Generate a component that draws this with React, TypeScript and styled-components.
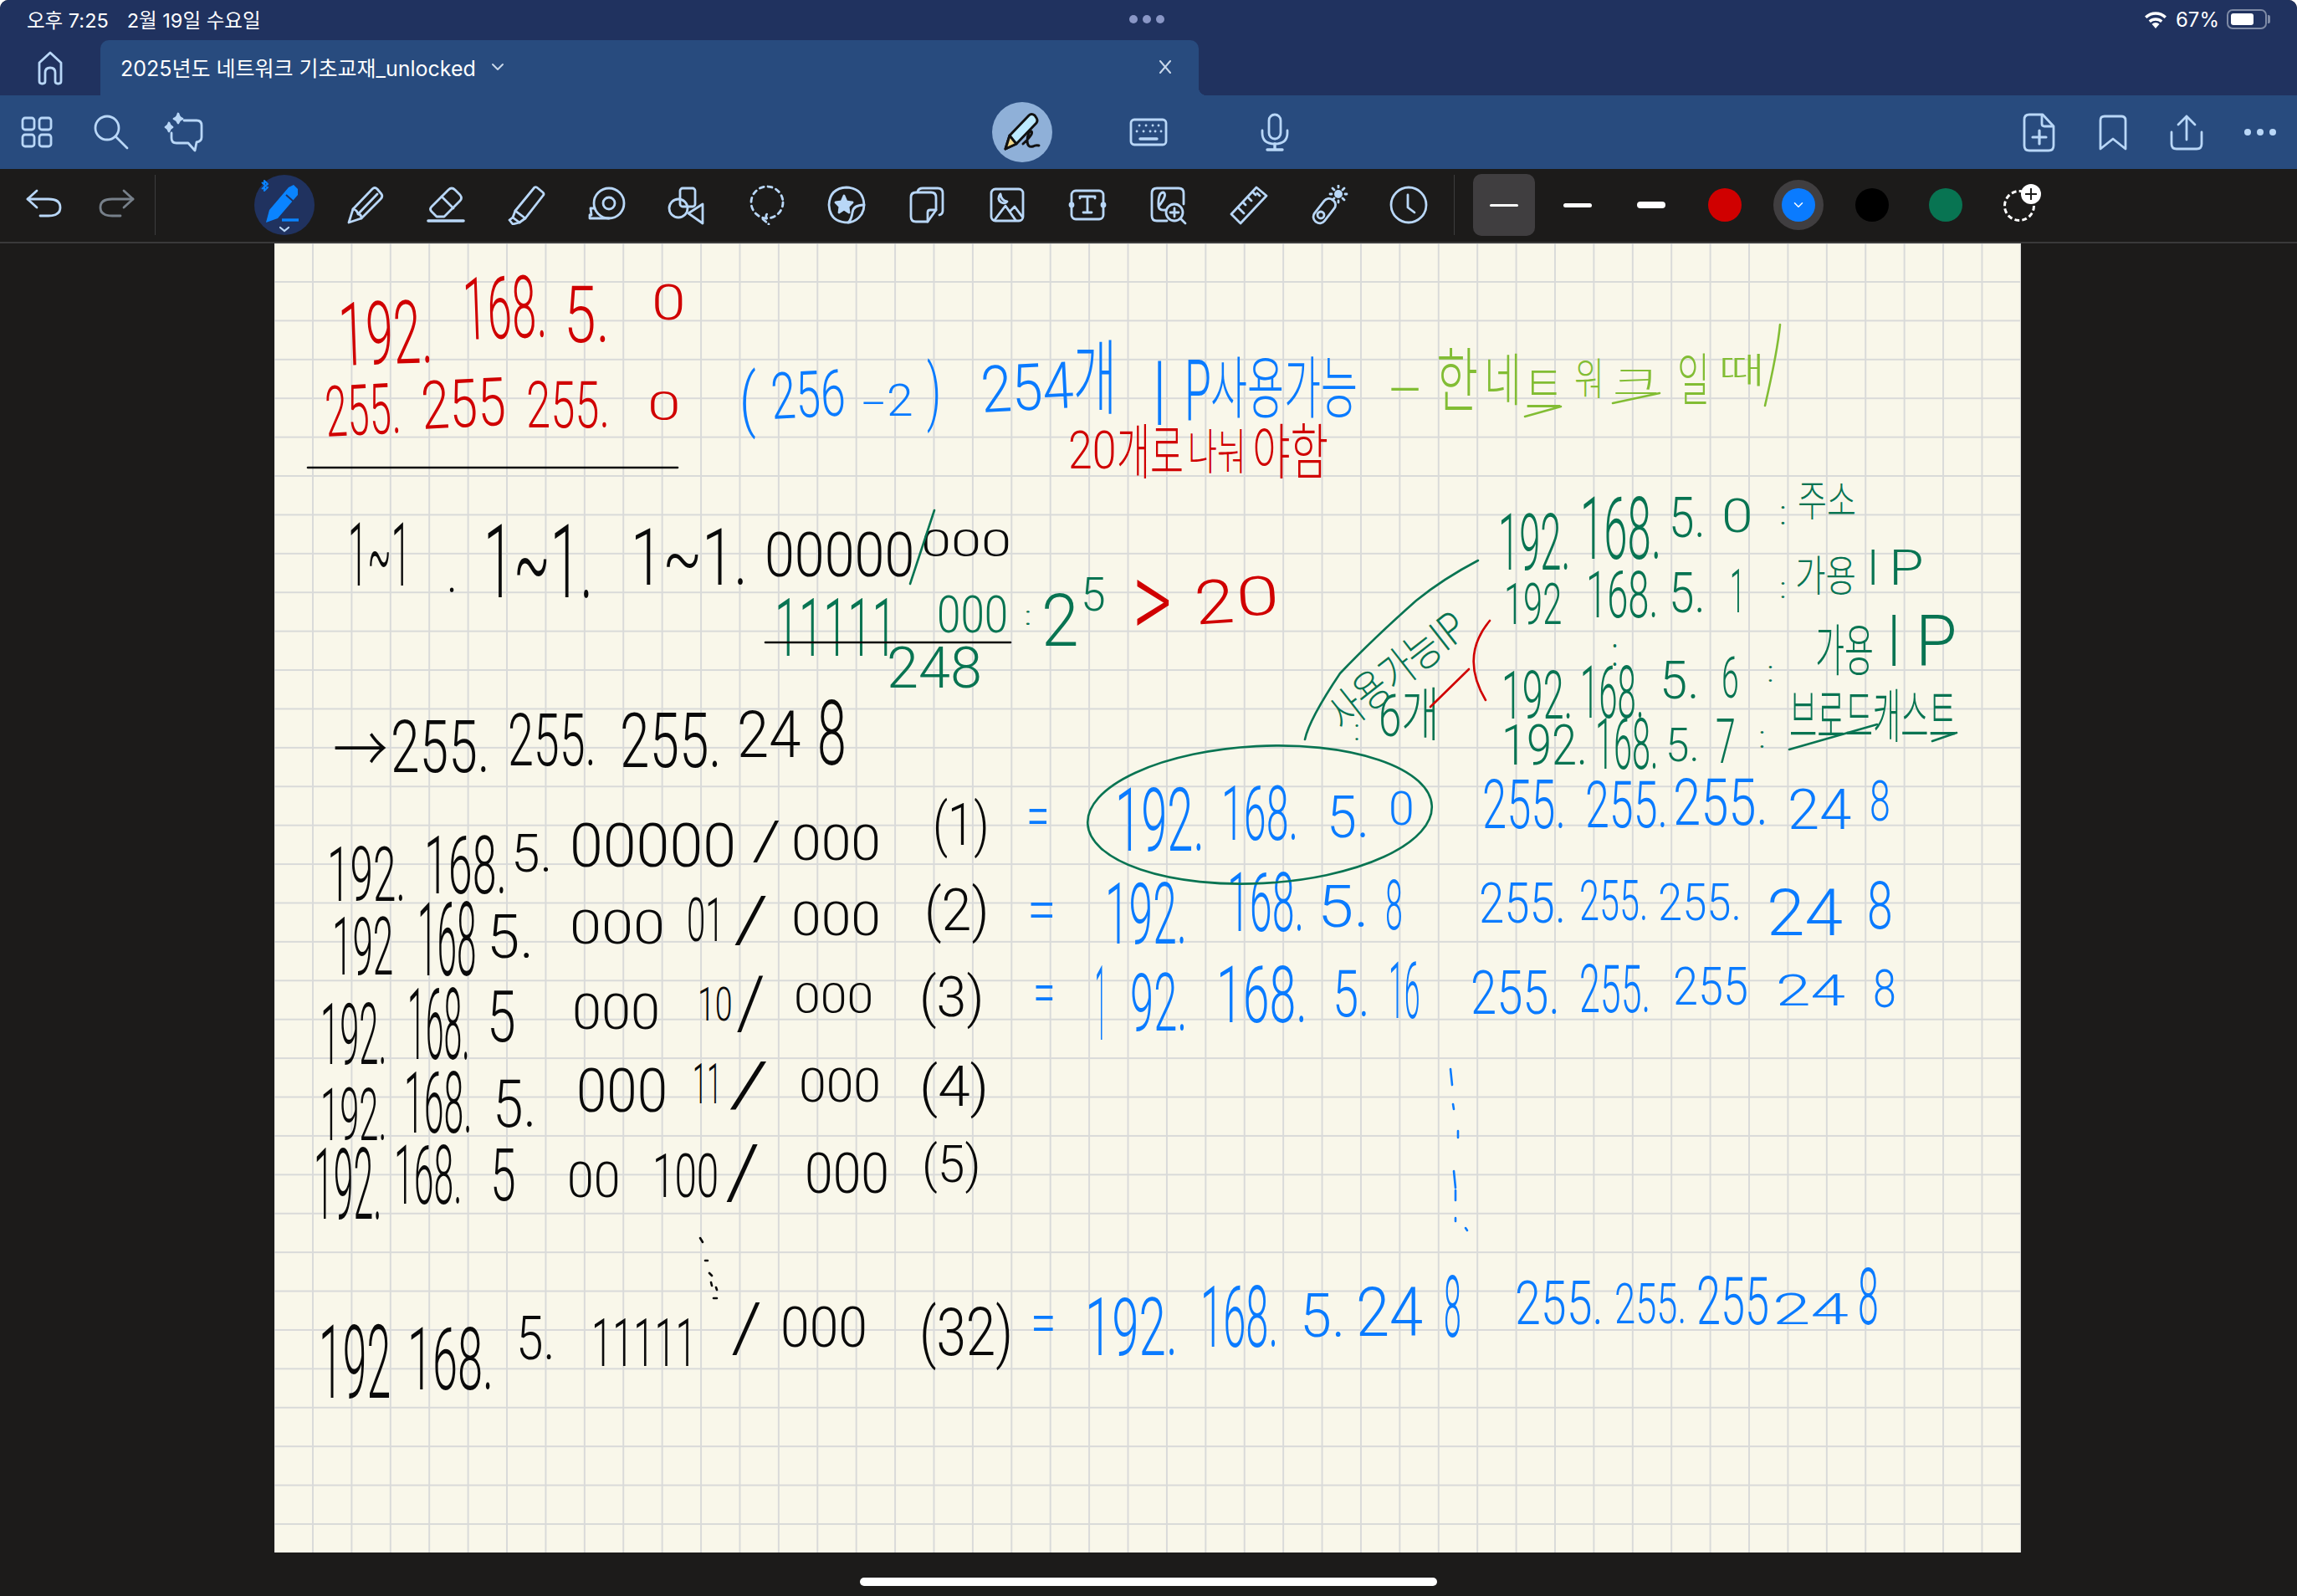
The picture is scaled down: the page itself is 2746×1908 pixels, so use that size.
import React from 'react';
import styled, { createGlobalStyle } from 'styled-components';

const GlobalStyle = createGlobalStyle`
  html, body {
    margin: 0;
    padding: 0;
    background: #ffffff;
  }
  * {
    box-sizing: border-box;
  }
`;

const Root = styled.div`
  display: flex;
  flex-direction: column;
  width: 2746px;
  height: 1908px;
  overflow: hidden;
  font-family: 'Inter', 'Noto Sans CJK KR', sans-serif;
  color: #ffffff;
  background: #1c1b1a;
  border-radius: 10px 10px 0 0;
`;

const Header = styled.header`
  height: 114px;
  background: #20325f;
`;

const StatusBar = styled.div`
  display: grid;
  grid-template-columns: 1fr auto 1fr;
  align-items: center;
  height: 48px;
  padding: 0 36px 2px 32px;
  font-size: 23.5px;
`;

const StatusLeft = styled.div`
  display: flex;
  gap: 22px;
`;

const StatusDots = styled.div`
  display: flex;
  gap: 6px;
`;

const StatusDot = styled.span`
  width: 10px;
  height: 10px;
  border-radius: 50%;
  background: #8a97c6;
`;

const StatusRight = styled.div`
  display: flex;
  align-items: center;
  justify-content: flex-end;
  gap: 9px;
  font-size: 24px;
`;

const Battery = styled.div`
  position: relative;
  width: 48px;
  height: 24px;
  padding: 3px;
  border: 2px solid #7e8aa5;
  border-radius: 7px;

  &::before {
    content: '';
    display: block;
    width: 27px;
    height: 100%;
    border-radius: 3px;
    background: #ffffff;
  }

  &::after {
    content: '';
    position: absolute;
    top: 5px;
    right: -6px;
    width: 3px;
    height: 10px;
    border-radius: 0 2px 2px 0;
    background: #7e8aa5;
  }
`;

const TabRow = styled.div`
  display: flex;
  height: 66px;
`;

const HomeSlot = styled.div`
  display: flex;
  align-items: center;
  justify-content: center;
  width: 120px;
  color: #b9d7f7;
`;

const Tab = styled.div`
  position: relative;
  display: flex;
  align-items: center;
  width: 1313px;
  padding: 0 32px 2px 24px;
  font-size: 25px;
  background: #284b7e;
  border-radius: 10px 10px 0 0;

  &::after {
    content: '';
    position: absolute;
    right: -10px;
    bottom: 0;
    width: 10px;
    height: 10px;
    background: radial-gradient(circle at 100% 0, #20325f 10px, #284b7e 10.5px);
  }
`;

const TabTitle = styled.span`
  flex: 0 0 auto;
`;

const TabChevron = styled.span`
  display: flex;
  margin-left: 18px;
  color: #c9d8ea;
`;

const TabClose = styled.span`
  display: flex;
  margin-left: auto;
  color: #c9d8ea;
`;

const MainToolbar = styled.div`
  display: grid;
  grid-template-columns: 1fr auto 1fr;
  align-items: center;
  height: 88px;
  color: #b9d7f7;
  background: #284b7e;
`;

const ToolGroup = styled.div<{ $end?: boolean }>`
  display: flex;
  align-items: center;
  justify-content: ${props => (props.$end ? 'flex-end' : 'flex-start')};
`;

const Slot = styled.div<{ $width: number }>`
  display: flex;
  flex: 0 0 auto;
  align-items: center;
  justify-content: center;
  width: ${props => props.$width}px;
  height: 72px;
`;

const InputCircle = styled.div`
  display: flex;
  align-items: center;
  justify-content: center;
  width: 72px;
  height: 72px;
  border-radius: 50%;
  background: #8fb0d8;
`;

const MoreDots = styled.div`
  display: flex;
  gap: 7px;
`;

const MoreDot = styled.span`
  width: 8px;
  height: 8px;
  border-radius: 50%;
  background: #b9d7f7;
`;

const PenToolbar = styled.div`
  display: flex;
  align-items: center;
  height: 89px;
  padding: 0 0 1px 8px;
  color: #b9d7f7;
  background: #1c1b1a;
  border-bottom: 2px solid #3a3a3a;
`;

const Divider = styled.span<{ $gapLeft: number; $gapRight: number }>`
  flex: 0 0 1px;
  height: 72px;
  margin-left: ${props => props.$gapLeft}px;
  margin-right: ${props => props.$gapRight}px;
  background: #3d3d3d;
`;

const Redo = styled.span`
  display: flex;
  color: #77808a;
`;

const ActivePen = styled.div`
  position: relative;
  display: flex;
  align-items: center;
  justify-content: center;
  width: 72px;
  height: 72px;
  border-radius: 50%;
  background: #20325f;
`;

const SizeBox = styled.div<{ $active?: boolean }>`
  display: flex;
  align-items: center;
  justify-content: center;
  width: 74px;
  height: 74px;
  border-radius: 10px;
  background: ${props => (props.$active ? '#403e40' : 'transparent')};
`;

const SizeDash = styled.span<{ $weight: number }>`
  width: 34px;
  height: ${props => props.$weight}px;
  border-radius: ${props => props.$weight / 2}px;
  background: #ffffff;
`;

const ColorRing = styled.div<{ $active?: boolean }>`
  display: flex;
  align-items: center;
  justify-content: center;
  width: 60px;
  height: 60px;
  border-radius: 50%;
  background: ${props => (props.$active ? '#403e40' : 'transparent')};
`;

const Swatch = styled.div<{ $color: string }>`
  display: flex;
  align-items: center;
  justify-content: center;
  width: 40px;
  height: 40px;
  border-radius: 50%;
  color: #ffffff;
  background: ${props => props.$color};
`;

const AddColor = styled.div`
  position: relative;
  width: 38px;
  height: 38px;
  margin-top: 2px;
  border: 3px dashed #ffffff;
  border-radius: 50%;
`;

const AddBadge = styled.span`
  position: absolute;
  top: -10px;
  right: -10px;
  display: flex;
  align-items: center;
  justify-content: center;
  width: 24px;
  height: 24px;
  border-radius: 50%;
  color: #1c1b1a;
  background: #ffffff;
`;

const Workspace = styled.main`
  display: flex;
  justify-content: flex-start;
  height: 1565px;
  padding-left: 328px;
`;

const Note = styled.section`
  position: relative;
  flex: 0 0 2088px;
  height: 1565px;
  overflow: hidden;
  background-color: #f9f7ea;
  background-image: linear-gradient(to right, #d9dad9 2px, transparent 2px),
    linear-gradient(to bottom, #d9dad9 2px, transparent 2px);
  background-position: 45px 45px;
  background-size: 46.42px 46.42px;
`;

const InkLayer = styled.svg`
  position: absolute;
  inset: 0;
  width: 100%;
  height: 100%;
  pointer-events: none;
`;

const Ink = styled.span<{
  $x: number;
  $y: number;
  $size: number;
  $stretch: number;
  $turn: number;
  $color: string;
}>`
  position: absolute;
  left: ${props => props.$x}px;
  top: ${props => props.$y}px;
  font-family: 'Roboto', 'Noto Sans CJK KR', sans-serif;
  font-size: ${props => props.$size}px;
  font-weight: 300;
  line-height: 0.76;
  white-space: pre;
  color: ${props => props.$color};
  transform: rotate(${props => props.$turn}deg) scaleX(${props => props.$stretch});
  transform-origin: left top;
`;

const HomeBarTrack = styled.div`
  display: flex;
  justify-content: center;
  padding-top: 30px;
`;

const HomeBar = styled.div`
  width: 690px;
  height: 10px;
  border-radius: 5px;
  background: #ffffff;
`;

const IconSvg = styled.svg`
  display: block;
  width: 48px;
  height: 48px;
  fill: none;
  stroke: currentColor;
  stroke-width: 2.8;
  stroke-linecap: round;
  stroke-linejoin: round;
`;

const Icon = ({ children }: { children: React.ReactNode }) => (
  <IconSvg viewBox="0 0 48 48">{children}</IconSvg>
);

const icons: Record<string, React.ReactNode> = {
  grid: (
    <>
      <rect x="7" y="7" width="14" height="14" rx="3" />
      <rect x="27" y="7" width="14" height="14" rx="3" />
      <rect x="7" y="27" width="14" height="14" rx="3" />
      <rect x="27" y="27" width="14" height="14" rx="3" />
    </>
  ),
  search: (
    <>
      <circle cx="20" cy="19" r="14" />
      <path d="M30 29 L44 43" />
    </>
  ),
  assistant: (
    <>
      <path d="M24 10 H39 Q45 10 45 16 V30 Q45 35 39 36 L37 46 L29 37 H15 Q9 37 9 31 V25" />
      <path d="M17 2 Q18 7 22 8 Q18 9 17 13 Q16 9 12 8 Q16 7 17 2 Z" fill="currentColor" />
      <path d="M6 13 Q7 17 10 18 Q7 19 6 23 Q5 19 2 18 Q5 17 6 13 Z" fill="currentColor" />
    </>
  ),
  keyboard: (
    <>
      <rect x="3" y="9" width="42" height="30" rx="4" />
      <path d="M14 32 H34" strokeWidth="3.4" />
      <path d="M13 16 h.1 M21 16 h.1 M29 16 h.1 M36 16 h.1 M10 23 h.1 M18 23 h.1 M26 23 h.1 M32 23 h.1 M39 23 h.1" />
    </>
  ),
  mic: (
    <>
      <rect x="17" y="3" width="14" height="29" rx="7" />
      <path d="M9 22 V25 Q9 38 24 38 Q39 38 39 25 V22" />
      <path d="M24 38 V44 M15 45 H33" strokeWidth="3.4" />
    </>
  ),
  newPage: (
    <>
      <path d="M12 3 H28 L41 17 V40 Q41 46 35 46 H12 Q6 46 6 40 V9 Q6 3 12 3 Z" />
      <path d="M27 4 V14 Q27 17 30 17 H40" />
      <path d="M24 22 V38 M16 30 H32" strokeWidth="3.2" />
    </>
  ),
  bookmark: (
    <>
      <path d="M9 44 V10 Q9 5 14 5 H34 Q39 5 39 10 V44 L24 32 Z" />
    </>
  ),
  share: (
    <>
      <path d="M24 33 V5 M14 15 L24 5 L34 15" />
      <path d="M6 24 V38 Q6 44 12 44 H36 Q42 44 42 38 V24" />
    </>
  ),
  undo: (
    <>
      <path d="M16 7 L5 17 L16 27" />
      <path d="M5 17 H30 Q44 17 44 27 Q44 37 30 37 H20" />
    </>
  ),
  redo: (
    <>
      <path d="M32 7 L43 17 L32 27" />
      <path d="M43 17 H18 Q4 17 4 27 Q4 37 18 37 H28" />
    </>
  ),
  pencil: (
    <>
      <path d="M5 45 L10 29 L33 5 Q36 2 39 5 L44 11 Q46 14 43 17 L20 40 Z" />
      <path d="M10 29 Q15 30 16 35 Q20 35 20 40 M16 35 L39 11" />
    </>
  ),
  eraser: (
    <>
      <path d="M14 38 L8 32 Q5 29 8 26 L28 6 Q32 2 36 6 L42 12 Q45 16 42 19 L23 38 Z" />
      <path d="M20 14 L34 28" />
      <path d="M4 43 H46" strokeWidth="3.6" />
    </>
  ),
  highlighter: (
    <>
      <path d="M12 31 L35 3 Q37 2 39 4 L45 9 Q47 11 45 13 L24 40 Z" />
      <path d="M12 31 L9 39 L17 45 L24 40" />
      <path d="M9 39 L5 42 L9 47 L17 45" />
    </>
  ),
  tape: (
    <>
      <circle cx="28" cy="22" r="18" />
      <circle cx="28" cy="22" r="7" />
      <path d="M11 28 H6 L7 36 H5 V40 H28" />
    </>
  ),
  shapes: (
    <>
      <rect x="17" y="4" width="18" height="22" rx="3" />
      <circle cx="15" cy="28" r="11" />
      <path d="M44 23 V46 L27 34 Z" />
    </>
  ),
  lasso: (
    <>
      <circle cx="25" cy="21" r="19" strokeDasharray="5 5" />
      <path d="M24 40 Q23 33 28 35 M20 41 L27 47" strokeDasharray="5 4" />
    </>
  ),
  sticker: (
    <>
      <path d="M26 45 Q4 45 3 24 Q4 4 24 3 Q44 4 45 24 Q45 30 42 35 Q36 44 26 45 Z" />
      <path d="M45 24 Q32 24 31 33 Q30 41 26 45" />
      <path d="M21 13 L24 20 L31 21 L26 26 L27 33 L21 29 L15 33 L16 26 L11 21 L18 20 Z" fill="currentColor" />
    </>
  ),
  elements: (
    <>
      <path d="M13 8 Q14 4 19 4 H37 Q43 4 43 10 V31 Q43 35 39 36" />
      <path d="M11 9 H29 Q35 9 35 15 V30 L25 44 H11 Q5 44 5 38 V15 Q5 9 11 9 Z" />
      <path d="M35 30 H28 Q25 30 25 33 V44" />
    </>
  ),
  image: (
    <>
      <rect x="5" y="5" width="38" height="38" rx="5" />
      <path d="M16 11 Q11 17 17 21 Q22 23 24 20 Q17 19 16 11 Z" />
      <path d="M9 42 L22 25 L34 42 M27 32 L33 26 L42 38" />
    </>
  ),
  textBox: (
    <>
      <rect x="5" y="7" width="38" height="34" rx="5" />
      <path d="M15 16 V14 H33 V16 M24 14 V33 M19 33 H29" />
      <circle cx="5" cy="24" r="2" fill="currentColor" />
      <circle cx="43" cy="24" r="2" fill="currentColor" />
    </>
  ),
  zoomBox: (
    <>
      <path d="M23 43 H11 Q5 43 5 37 V10 Q5 4 11 4 H37 Q43 4 43 10 V23" />
      <path d="M13 26 Q24 12 19 9 Q12 9 13 26 Q14 31 21 30" />
      <circle cx="32" cy="33" r="10" />
      <path d="M32 28 V38 M27 33 H37" />
      <path d="M39 40 L45 46" />
    </>
  ),
  ruler: (
    <>
      <path d="M4 35 L34 3 L46 13 L15 46 Z" />
      <path d="M12 27 L16 31 M18 21 L21 24 M24 15 L28 19 M30 9 L33 12 M38 13 L35 10 M19 34 L16 31" />
    </>
  ),
  laser: (
    <>
      <rect x="12" y="15" width="15" height="33" rx="7" transform="rotate(38 20 31)" />
      <circle cx="15" cy="36" r="4" />
      <circle cx="36" cy="11" r="5" fill="currentColor" stroke="none" />
      <path d="M36 1 V3 M36 19 V21 M26 11 H28 M44 11 H46 M29 4 L31 6 M41 16 L43 18 M43 4 L41 6 M29 18 L31 16" />
    </>
  ),
  clock: (
    <>
      <circle cx="24" cy="24" r="21" />
      <path d="M23 12 V27 L31 33" />
    </>
  ),
};

const HomeIcon = () => (
  <Icon>
    <path d="M11 40 V18 L24 6 L37 18 V40 Q37 43 34 43 H33 Q30 43 30 40 V30 Q30 24 24 24 Q18 24 18 30 V40 Q18 43 15 43 H14 Q11 43 11 40 Z" />
  </Icon>
);

const Glyph = styled.svg`
  display: block;
  fill: none;
  stroke: currentColor;
  stroke-linecap: round;
  stroke-linejoin: round;
`;

const Chevron = ({ size = 16 }: { size?: number }) => (
  <Glyph viewBox="0 0 16 16" width={size} height={size} strokeWidth={2}>
    <path d="M2 5 L8 11 L14 5" />
  </Glyph>
);

const Close = () => (
  <Glyph viewBox="0 0 16 16" width={16} height={16} strokeWidth={2}>
    <path d="M2 1 L14 15 M14 1 L2 15" />
  </Glyph>
);

const Wifi = () => (
  <svg viewBox="0 0 30 22" width="30" height="22">
    <path d="M15 22 L10.5 16.8 A6.5 6.5 0 0 1 19.5 16.8 Z" fill="#fff" />
    <path d="M7.8 13.8 A10.8 10.8 0 0 1 22.2 13.8" fill="none" stroke="#fff" strokeWidth="3.4" />
    <path d="M3.2 8.8 A17 17 0 0 1 26.8 8.8" fill="none" stroke="#fff" strokeWidth="3.4" />
  </svg>
);

const InputPenIcon = () => (
  <svg viewBox="0 0 48 48" width="48" height="48">
    <path
      d="M4 44 L9 28 L32 4 Q35 1 39 4 L41 7 Q43 10 41 13 L17 38 Z"
      fill="#bdeaff"
      stroke="#111"
      strokeWidth="3"
      strokeLinejoin="round"
    />
    <path d="M4 44 L9 28 L17 38 Z" fill="#f2d98b" stroke="#111" strokeWidth="3" strokeLinejoin="round" />
    <path
      d="M25 38 Q38 26 35 23 Q31 22 30 34 Q30 43 37 41 Q40 39 44 40"
      fill="none"
      stroke="#111"
      strokeWidth="3"
      strokeLinecap="round"
    />
  </svg>
);

const ActivePenIcon = () => (
  <svg viewBox="0 0 72 72" width="72" height="72">
    <path d="M14 57 L18 42 L41 15 L47 12 L52 17 L52 24 L28 52 Z" fill="#0a84ff" />
    <path d="M38 24 L47 32" stroke="#20325f" strokeWidth="2" />
    <path d="M33 54 H53" stroke="#0a84ff" strokeWidth="3.4" />
    <path
      d="M9 9 L16 15 L12 19 V7 L16 11 L9 17"
      fill="none"
      stroke="#0a84ff"
      strokeWidth="2"
      strokeLinejoin="round"
    />
    <path d="M31 63 L36 67 L41 63" fill="none" stroke="#b9d7f7" strokeWidth="2.2" strokeLinecap="round" />
  </svg>
);

const NOTE_LEFT = 328;
const NOTE_TOP = 291;

const RED = '#d00000';
const BLUE = '#0a7bff';
const GREEN = '#087452';
const LEAF = '#82bd34';
const BLACK = '#0a0a0a';

// text, left, right, top, bottom, turn
type Mark = [string, number, number, number, number, number?];

const emWidth = (text: string) =>
  [...text].reduce((sum, ch) => {
    if (/[\uac00-\ud7a3]/.test(ch)) return sum + 0.92;
    if (/[0-9=>P]/.test(ch)) return sum + 0.56;
    if (/[()/]/.test(ch)) return sum + 0.34;
    if (/[.:I-]/.test(ch)) return sum + 0.26;
    if (ch === '~' || ch === '→') return sum + 0.7;
    return sum + 0.5;
  }, 0);

const writing: { color: string; marks: Mark[] }[] = [
  {
    color: RED,
    marks: [
      ['192.', 403, 518, 362, 437, -2],
      ['168.', 552, 654, 332, 406, -2],
      ['5.', 674, 731, 343, 410],
      ['0', 779, 820, 341, 383],
      ['255.', 387, 479, 463, 523, -3],
      ['255', 502, 604, 457, 514, -3],
      ['255.', 629, 731, 457, 512],
      ['0', 774, 814, 468, 502],
      ['20', 1277, 1335, 515, 560],
      ['개로', 1335, 1415, 510, 578],
      ['나눠', 1420, 1490, 515, 570],
      ['야함', 1497, 1588, 510, 578],
      ['>', 1354, 1405, 669, 763],
      ['2', 1426, 1474, 696, 748, -4],
      ['0', 1476, 1528, 692, 738, -4],
    ],
  },
  {
    color: BLUE,
    marks: [
      ['(', 884, 905, 440, 520],
      ['256', 920, 1010, 447, 502, -3],
      ['-', 1030, 1056, 462, 498],
      ['2', 1060, 1092, 460, 498],
      [')', 1108, 1126, 430, 512],
      ['254', 1171, 1283, 439, 494, -3],
      ['개', 1283, 1335, 410, 503],
      ['I', 1378, 1394, 431, 508],
      ['P', 1416, 1445, 430, 503],
      ['사용가능', 1447, 1623, 429, 506],
      ['192.', 1333, 1442, 942, 1017],
      ['168.', 1460, 1554, 940, 1004],
      ['5.', 1586, 1639, 952, 1002],
      ['0', 1660, 1691, 947, 987],
      ['255.', 1772, 1874, 932, 990],
      ['255.', 1895, 1996, 935, 990],
      ['255.', 2000, 2116, 932, 987],
      ['24', 2137, 2214, 945, 992],
      ['8', 2235, 2260, 935, 982],
      ['=', 1227, 1255, 949, 1001],
      ['=', 1228, 1263, 1061, 1113],
      ['192.', 1321, 1421, 1057, 1129],
      ['168.', 1467, 1561, 1044, 1114],
      ['5.', 1575, 1639, 1059, 1109],
      ['8', 1656, 1677, 1052, 1111],
      ['255.', 1768, 1874, 1057, 1104],
      ['255.', 1888, 1972, 1054, 1101],
      ['255.', 1982, 2084, 1057, 1101],
      ['24', 2112, 2204, 1064, 1119],
      ['8', 2232, 2263, 1054, 1111],
      ['=', 1235, 1262, 1160, 1212],
      ['1', 1309, 1323, 1154, 1243],
      ['92.', 1351, 1421, 1164, 1233],
      ['168.', 1454, 1565, 1156, 1223],
      ['5.', 1593, 1639, 1161, 1216],
      ['16', 1660, 1698, 1151, 1218],
      ['255.', 1758, 1867, 1161, 1213],
      ['255.', 1888, 1975, 1154, 1211],
      ['255', 2000, 2091, 1156, 1201],
      ['24', 2123, 2207, 1166, 1203],
      ['8', 2239, 2267, 1159, 1204],
      ['=', 1232, 1263, 1555, 1607],
      ['192.', 1297, 1410, 1552, 1621],
      ['168.', 1435, 1530, 1539, 1611],
      ['5.', 1554, 1610, 1547, 1599],
      ['24', 1621, 1702, 1539, 1597],
      ['8', 1726, 1747, 1527, 1599],
      ['255.', 1811, 1919, 1532, 1584],
      ['255.', 1930, 2018, 1534, 1582],
      ['255', 2028, 2116, 1527, 1584],
      ['24', 2119, 2211, 1547, 1584],
      ['8', 2221, 2246, 1517, 1584],
    ],
  },
  {
    color: LEAF,
    marks: [
      ['-', 1660, 1696, 440, 485],
      ['한', 1717, 1767, 419, 500],
      ['네', 1774, 1819, 425, 490],
      ['트', 1823, 1868, 440, 500],
      ['워', 1882, 1918, 430, 480],
      ['크', 1928, 1984, 440, 480],
      ['일', 2005, 2044, 425, 490],
      ['때', 2054, 2110, 425, 465],
    ],
  },
  {
    color: GREEN,
    marks: [
      ['11111', 926, 1073, 716, 784],
      ['000', 1120, 1206, 714, 757],
      [':', 1224, 1236, 725, 747],
      ['2', 1245, 1290, 710, 772],
      ['5', 1292, 1322, 692, 731],
      ['248', 1060, 1175, 774, 823],
      ['192.', 1791, 1879, 615, 682],
      ['168.', 1889, 1988, 594, 668],
      ['5.', 1995, 2040, 596, 643],
      ['0', 2058, 2096, 598, 637],
      [':', 2127, 2138, 598, 627],
      ['주소', 2149, 2219, 576, 625],
      ['192', 1798, 1868, 698, 747],
      ['168.', 1896, 1984, 684, 739],
      ['5.', 1995, 2040, 686, 733],
      ['1', 2068, 2086, 682, 733],
      [':', 2127, 2138, 690, 715],
      ['가용', 2146, 2219, 666, 715],
      ['I', 2232, 2246, 658, 700],
      ['P', 2258, 2296, 658, 700],
      [':', 1926, 1937, 762, 796],
      ['192.', 1795, 1882, 804, 860],
      ['168.', 1889, 1967, 796, 858],
      ['5.', 1984, 2033, 790, 835],
      ['6', 2058, 2079, 786, 835],
      [':', 2112, 2123, 790, 815],
      ['가용', 2170, 2240, 749, 813],
      ['I', 2256, 2272, 735, 796],
      ['P', 2290, 2335, 735, 796],
      ['192.', 1795, 1900, 868, 915],
      ['168.', 1907, 1984, 858, 919],
      ['5.', 1991, 2033, 872, 911],
      ['7', 2051, 2075, 860, 913],
      [':', 2102, 2113, 868, 894],
      ['브로드캐스트', 2139, 2339, 827, 894],
      ['사용가능IP', 1582, 1772, 842, 892, -38],
      [':', 1618, 1628, 860, 885],
      ['6개', 1648, 1721, 825, 892],
    ],
  },
  {
    color: BLACK,
    marks: [
      ['1~1', 416, 492, 625, 700],
      ['.', 534, 548, 660, 708],
      ['1~1.', 578, 712, 627, 714],
      ['1~1.', 754, 897, 633, 700],
      ['00000', 914, 1095, 637, 690],
      ['000', 1101, 1210, 633, 665],
      ['→', 398, 444, 870, 925],
      ['255.', 467, 588, 861, 923],
      ['255.', 607, 715, 853, 915],
      ['255.', 741, 865, 853, 917],
      ['24', 881, 958, 851, 906],
      ['8', 977, 1012, 837, 914],
      ['192.', 391, 487, 1012, 1077],
      ['168.', 507, 608, 1000, 1069],
      ['5.', 611, 662, 997, 1042],
      ['00000', 681, 882, 985, 1037],
      ['/', 899, 929, 975, 1037],
      ['000', 946, 1054, 987, 1029],
      ['(1)', 1115, 1185, 955, 1022],
      ['192', 397, 471, 1097, 1166],
      ['168', 499, 570, 1079, 1166],
      ['5.', 582, 640, 1094, 1146],
      ['000', 681, 796, 1089, 1129],
      ['01', 821, 866, 1074, 1126],
      ['/', 877, 913, 1065, 1138],
      ['000', 946, 1054, 1079, 1119],
      ['(2)', 1105, 1185, 1057, 1124],
      ['192.', 383, 464, 1201, 1273],
      ['168.', 487, 563, 1181, 1266],
      ['5', 582, 617, 1186, 1246],
      ['000', 684, 790, 1189, 1231],
      ['10', 834, 876, 1181, 1221],
      ['/', 880, 910, 1160, 1243],
      ['000', 949, 1045, 1176, 1211],
      ['(3)', 1099, 1179, 1162, 1226],
      ['192.', 383, 464, 1301, 1363],
      ['168.', 483, 566, 1283, 1355],
      ['5.', 589, 643, 1291, 1348],
      ['000', 689, 799, 1278, 1330],
      ['11', 828, 863, 1273, 1320],
      ['/', 871, 913, 1264, 1335],
      ['000', 955, 1054, 1278, 1318],
      ['(4)', 1099, 1185, 1269, 1333],
      ['192.', 375, 458, 1373, 1457],
      ['168.', 471, 554, 1370, 1440],
      ['5', 586, 617, 1373, 1435],
      ['00', 678, 742, 1390, 1432],
      ['100', 780, 860, 1380, 1432],
      ['/', 867, 903, 1362, 1447],
      ['000', 962, 1064, 1380, 1427],
      ['(5)', 1102, 1175, 1365, 1423],
      ['192', 381, 468, 1584, 1671],
      ['168.', 487, 592, 1587, 1661],
      ['5.', 617, 665, 1574, 1626],
      ['11111', 707, 834, 1577, 1634],
      ['/', 874, 906, 1550, 1628],
      ['000', 933, 1038, 1564, 1611],
      ['(32)', 1099, 1214, 1557, 1632],
    ],
  },
];

const placeMark = ([text, left, right, top, bottom, turn = 0]: Mark) => {
  const tall = /[\uac00-\ud7a3()/]/.test(text);
  const size = (bottom - top) / (tall ? 0.95 : 0.711);
  const offset = (tall ? -0.07 : 0.01) * size;
  return {
    $x: left - NOTE_LEFT,
    $y: top - offset - NOTE_TOP,
    $size: size,
    $stretch: (right - left) / (emWidth(text) * size),
    $turn: turn,
  };
};

const toolbarLeft = ['grid', 'search', 'assistant'];
const toolbarRight = ['newPage', 'bookmark', 'share'];
const penTools = [
  'pencil',
  'eraser',
  'highlighter',
  'tape',
  'shapes',
  'lasso',
  'sticker',
  'elements',
  'image',
  'textBox',
  'zoomBox',
  'ruler',
  'laser',
  'clock',
];

const App = () => (
  <Root>
    <GlobalStyle />
    <Header>
      <StatusBar>
        <StatusLeft>
          <span>오후 7:25</span>
          <span>2월 19일 수요일</span>
        </StatusLeft>
        <StatusDots>
          <StatusDot />
          <StatusDot />
          <StatusDot />
        </StatusDots>
        <StatusRight>
          <Wifi />
          <span>67%</span>
          <Battery />
        </StatusRight>
      </StatusBar>
      <TabRow>
        <HomeSlot>
          <HomeIcon />
        </HomeSlot>
        <Tab>
          <TabTitle>2025년도 네트워크 기초교재_unlocked</TabTitle>
          <TabChevron>
            <Chevron />
          </TabChevron>
          <TabClose>
            <Close />
          </TabClose>
        </Tab>
      </TabRow>
    </Header>

    <MainToolbar>
      <ToolGroup>
        {toolbarLeft.map(name => (
          <Slot key={name} $width={88}>
            <Icon>{icons[name]}</Icon>
          </Slot>
        ))}
      </ToolGroup>
      <ToolGroup>
        <Slot $width={151}>
          <InputCircle>
            <InputPenIcon />
          </InputCircle>
        </Slot>
        <Slot $width={151}>
          <Icon>{icons.keyboard}</Icon>
        </Slot>
        <Slot $width={151}>
          <Icon>{icons.mic}</Icon>
        </Slot>
      </ToolGroup>
      <ToolGroup $end>
        {toolbarRight.map(name => (
          <Slot key={name} $width={88}>
            <Icon>{icons[name]}</Icon>
          </Slot>
        ))}
        <Slot $width={88}>
          <MoreDots>
            <MoreDot />
            <MoreDot />
            <MoreDot />
          </MoreDots>
        </Slot>
      </ToolGroup>
    </MainToolbar>

    <PenToolbar>
      <Slot $width={88}>
        <Icon>{icons.undo}</Icon>
      </Slot>
      <Slot $width={88}>
        <Redo>
          <Icon>{icons.redo}</Icon>
        </Redo>
      </Slot>
      <Divider $gapLeft={1} $gapRight={106} />
      <Slot $width={96}>
        <ActivePen>
          <ActivePenIcon />
        </ActivePen>
      </Slot>
      {penTools.map(name => (
        <Slot key={name} $width={96}>
          <Icon>{icons[name]}</Icon>
        </Slot>
      ))}
      <Divider $gapLeft={6} $gapRight={15} />
      <Slot $width={88}>
        <SizeBox $active>
          <SizeDash $weight={3} />
        </SizeBox>
      </Slot>
      <Slot $width={88}>
        <SizeBox>
          <SizeDash $weight={5} />
        </SizeBox>
      </Slot>
      <Slot $width={88}>
        <SizeBox>
          <SizeDash $weight={8} />
        </SizeBox>
      </Slot>
      <Slot $width={88}>
        <ColorRing>
          <Swatch $color="#d00000" />
        </ColorRing>
      </Slot>
      <Slot $width={88}>
        <ColorRing $active>
          <Swatch $color="#0a7bff">
            <Chevron size={12} />
          </Swatch>
        </ColorRing>
      </Slot>
      <Slot $width={88}>
        <ColorRing>
          <Swatch $color="#000000" />
        </ColorRing>
      </Slot>
      <Slot $width={88}>
        <ColorRing>
          <Swatch $color="#087452" />
        </ColorRing>
      </Slot>
      <Slot $width={88}>
        <AddColor>
          <AddBadge>
            <Glyph viewBox="0 0 16 16" width={14} height={14} strokeWidth={2.4}>
              <path d="M8 1 V15 M1 8 H15" />
            </Glyph>
          </AddBadge>
        </AddColor>
      </Slot>
    </PenToolbar>

    <Workspace>
      <Note>
        {writing.map(group =>
          group.marks.map(mark => (
            <Ink key={`${group.color}-${mark[0]}-${mark[1]}-${mark[3]}`} $color={group.color} {...placeMark(mark)}>
              {mark[0]}
            </Ink>
          ))
        )}
        <InkLayer viewBox="328 291 2088 1565" fill="none" strokeLinecap="round" strokeLinejoin="round">
          <g stroke={BLACK} strokeWidth="2.6">
            <path d="M368 559 H810" />
            <path d="M915 768 H1208" />
            <path d="M837 1480 l3 5 M843 1507 h3 M848 1522 l3 3 M850 1533 l1 4 M856 1539 l1 3 M853 1552 h4" />
          </g>
          <g stroke={GREEN} strokeWidth="2.6">
            <path d="M1088 698 L1117 610" />
            <path d="M1767 670 Q1725 692 1693 718 Q1640 765 1602 805 Q1565 860 1560 884" />
            <ellipse cx="1506" cy="974" rx="206" ry="82" transform="rotate(-3 1506 974)" />
            <path d="M2139 896 L2244 866 M2310 886 L2339 876" />
          </g>
          <g stroke={RED} strokeWidth="2.6">
            <path d="M1781 742 Q1745 785 1776 837" />
            <path d="M1710 845 L1756 800" />
          </g>
          <g stroke={LEAF} strokeWidth="2.6">
            <path d="M2128 388 Q2125 420 2110 485" />
            <path d="M1823 498 L1866 486 M1928 482 L1984 470" />
          </g>
          <g stroke={BLUE} strokeWidth="2.6">
            <path d="M1734 1278 l2 19 M1737 1320 l1 6 M1743 1352 v8 M1738 1400 l2 20 M1740 1423 v12 M1740 1456 v4 M1752 1468 l2 3" />
          </g>
        </InkLayer>
      </Note>
    </Workspace>

    <HomeBarTrack>
      <HomeBar />
    </HomeBarTrack>
  </Root>
);

export default App;
